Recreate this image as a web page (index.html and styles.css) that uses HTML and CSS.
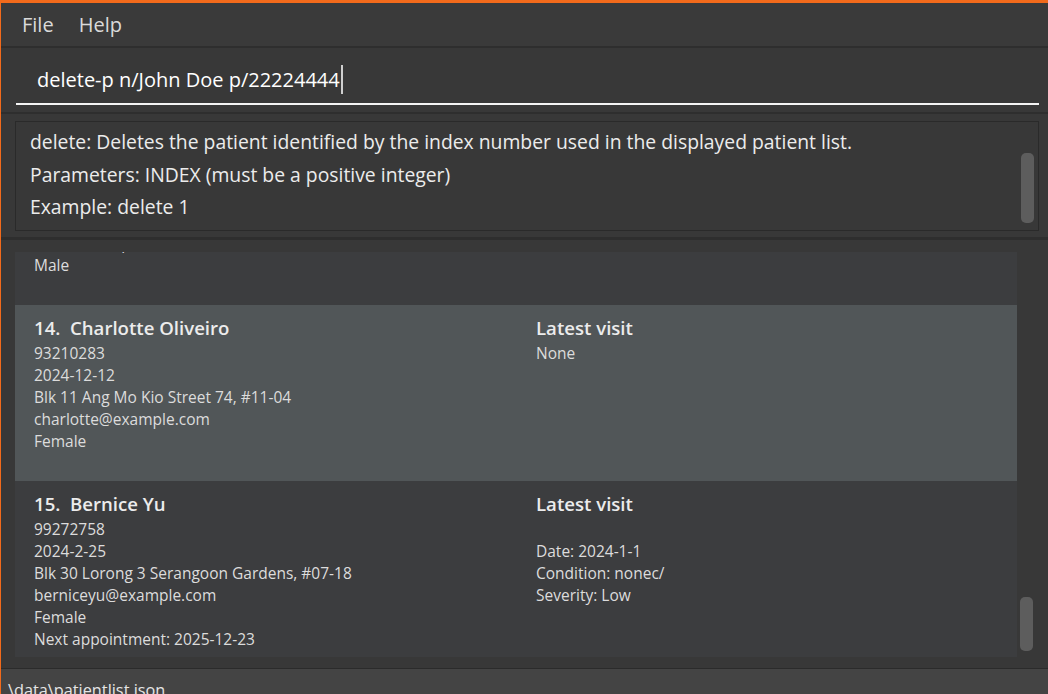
FILE: index.html
```html
<!DOCTYPE html>
<html>
<head>
<meta charset="utf-8">
<link rel="stylesheet" href="styles.css">
</head>
<body>
<div class="window">
  <div class="menubar">
    <span class="menu-item">File</span>
    <span class="menu-item">Help</span>
  </div>
  <div class="command">
    <div class="cmd-input">
      <span class="cmd-text">delete-p n/John Doe p/22224444</span><span class="caret"></span>
    </div>
  </div>
  <div class="result-panel">
    <div class="result-box">
      <div class="result-text">
        <div>delete: Deletes the patient identified by the index number used in the displayed patient list.</div>
        <div>Parameters: INDEX (must be a positive integer)</div>
        <div>Example: delete 1</div>
      </div>
      <div class="rscroll"><div class="rthumb"></div></div>
    </div>
  </div>
  <div class="list-panel">
    <div class="list-view">
      <div class="list-inner">
        <div class="card">
          <div class="col-left">
            <div class="name">13.&nbsp;&nbsp;Irfan Ibrahim</div>
            <div class="line">92492021</div>
            <div class="line">2024-3-14</div>
            <div class="line">Blk 47 Tampines Street 20, #17-35</div>
            <div class="line">irfan@example.com</div>
            <div class="line">Male</div>
          </div>
          <div class="col-right">
            <div class="name">Latest visit</div>
            <div class="line">None</div>
          </div>
        </div>
        <div class="card selected">
          <div class="col-left">
            <div class="name">14.&nbsp;&nbsp;Charlotte Oliveiro</div>
            <div class="line">93210283</div>
            <div class="line">2024-12-12</div>
            <div class="line">Blk 11 Ang Mo Kio Street 74, #11-04</div>
            <div class="line">charlotte@example.com</div>
            <div class="line">Female</div>
          </div>
          <div class="col-right">
            <div class="name">Latest visit</div>
            <div class="line">None</div>
          </div>
        </div>
        <div class="card">
          <div class="col-left">
            <div class="name">15.&nbsp;&nbsp;Bernice Yu</div>
            <div class="line">99272758</div>
            <div class="line">2024-2-25</div>
            <div class="line">Blk 30 Lorong 3 Serangoon Gardens, #07-18</div>
            <div class="line">berniceyu@example.com</div>
            <div class="line">Female</div>
            <div class="line">Next appointment: 2025-12-23</div>
          </div>
          <div class="col-right">
            <div class="name">Latest visit</div>
            <div class="line">&nbsp;</div>
            <div class="line">Date: 2024-1-1</div>
            <div class="line">Condition: nonec/</div>
            <div class="line">Severity: Low</div>
          </div>
        </div>
      </div>
    </div>
    <div class="lscroll"><div class="lthumb"></div></div>
  </div>
  <div class="status">\data\patientlist.json</div>
</div>
</body>
</html>
```

FILE: styles.css
```css
* { box-sizing: border-box; }
html, body { margin: 0; padding: 0; }
body {
  width: 1048px;
  height: 694px;
  overflow: hidden;
  background: #383838;
  font-family: "Open Sans", "Noto Sans", sans-serif;
}
.window {
  width: 1048px;
  height: 694px;
  border-top: 3px solid #f26a1b;
  border-left: 1px solid #f26a1b;
  display: flex;
  flex-direction: column;
  overflow: hidden;
}
.menubar {
  height: 45px;
  flex: none;
  background: #3a3a3a;
  border-bottom: 2px solid #2e2e2e;
  display: flex;
  align-items: center;
  padding-left: 21px;
  gap: 25px;
  padding-bottom: 1px;
}
.menu-item {
  color: #dadada;
  font-size: 20px;
}
.command {
  height: 66px;
  flex: none;
  background: #383838;
  border-bottom: 2px solid #2e2e2e;
  padding: 0 9px 0 15px;
}
.cmd-input {
  height: 57px;
  border-bottom: 2px solid #f4f4f4;
  display: flex;
  align-items: center;
  padding-left: 21px;
  padding-top: 7px;
}
.cmd-text {
  color: #ffffff;
  font-size: 20px;
}
.caret {
  display: inline-block;
  width: 2px;
  height: 29px;
  background: #cfcfcf;
  margin-left: 1px;
}
.result-panel {
  height: 126px;
  flex: none;
  background: #383838;
  border-bottom: 3px solid #2e2e2e;
  padding: 7px 9px 0 14px;
}
.result-box {
  height: 110px;
  border: 1px solid #2a2a2a;
  background: #383838;
  display: flex;
}
.result-text {
  flex: 1;
  padding: 4px 0 0 14px;
  color: #ececec;
  font-size: 19.35px;
  line-height: 32.5px;
  white-space: nowrap;
}
.rscroll {
  width: 18px;
  padding: 31px 4px 0 1px;
}
.rthumb {
  width: 13px;
  height: 70px;
  background: #5d5d5d;
  border-radius: 5px;
}
.list-panel {
  height: 428px;
  flex: none;
  background: #383838;
  display: flex;
  padding: 12px 0 11px 14px;
}
.list-view {
  width: 1003px;
  height: 405px;
  overflow: hidden;
}
.list-inner {
  margin-top: -123px;
}
.card {
  display: flex;
  min-height: 176px;
  background: #3c3d3f;
  padding: 9px 0 7px 19px;
}
.card.selected {
  background: #515658;
}
.col-left {
  width: 502px;
}
.col-right {
  flex: 1;
}
.name {
  font-weight: 600;
  font-size: 18.6px;
  line-height: 28px;
  color: #ececec;
  white-space: pre;
}
.line {
  font-size: 15.5px;
  line-height: 22px;
  color: #dcdcdc;
  white-space: nowrap;
}
.lscroll {
  width: 31px;
  padding: 345px 0 0 3px;
}
.lthumb {
  width: 13px;
  height: 54px;
  background: #5d5d5d;
  border-radius: 5px;
}
.status {
  flex: 1;
  background: #444444;
  border-top: 1px solid #2b2b2b;
  color: #e6e6e6;
  font-size: 16.3px;
  padding: 10px 0 0 7px;
  line-height: 22px;
  white-space: nowrap;
}
```
